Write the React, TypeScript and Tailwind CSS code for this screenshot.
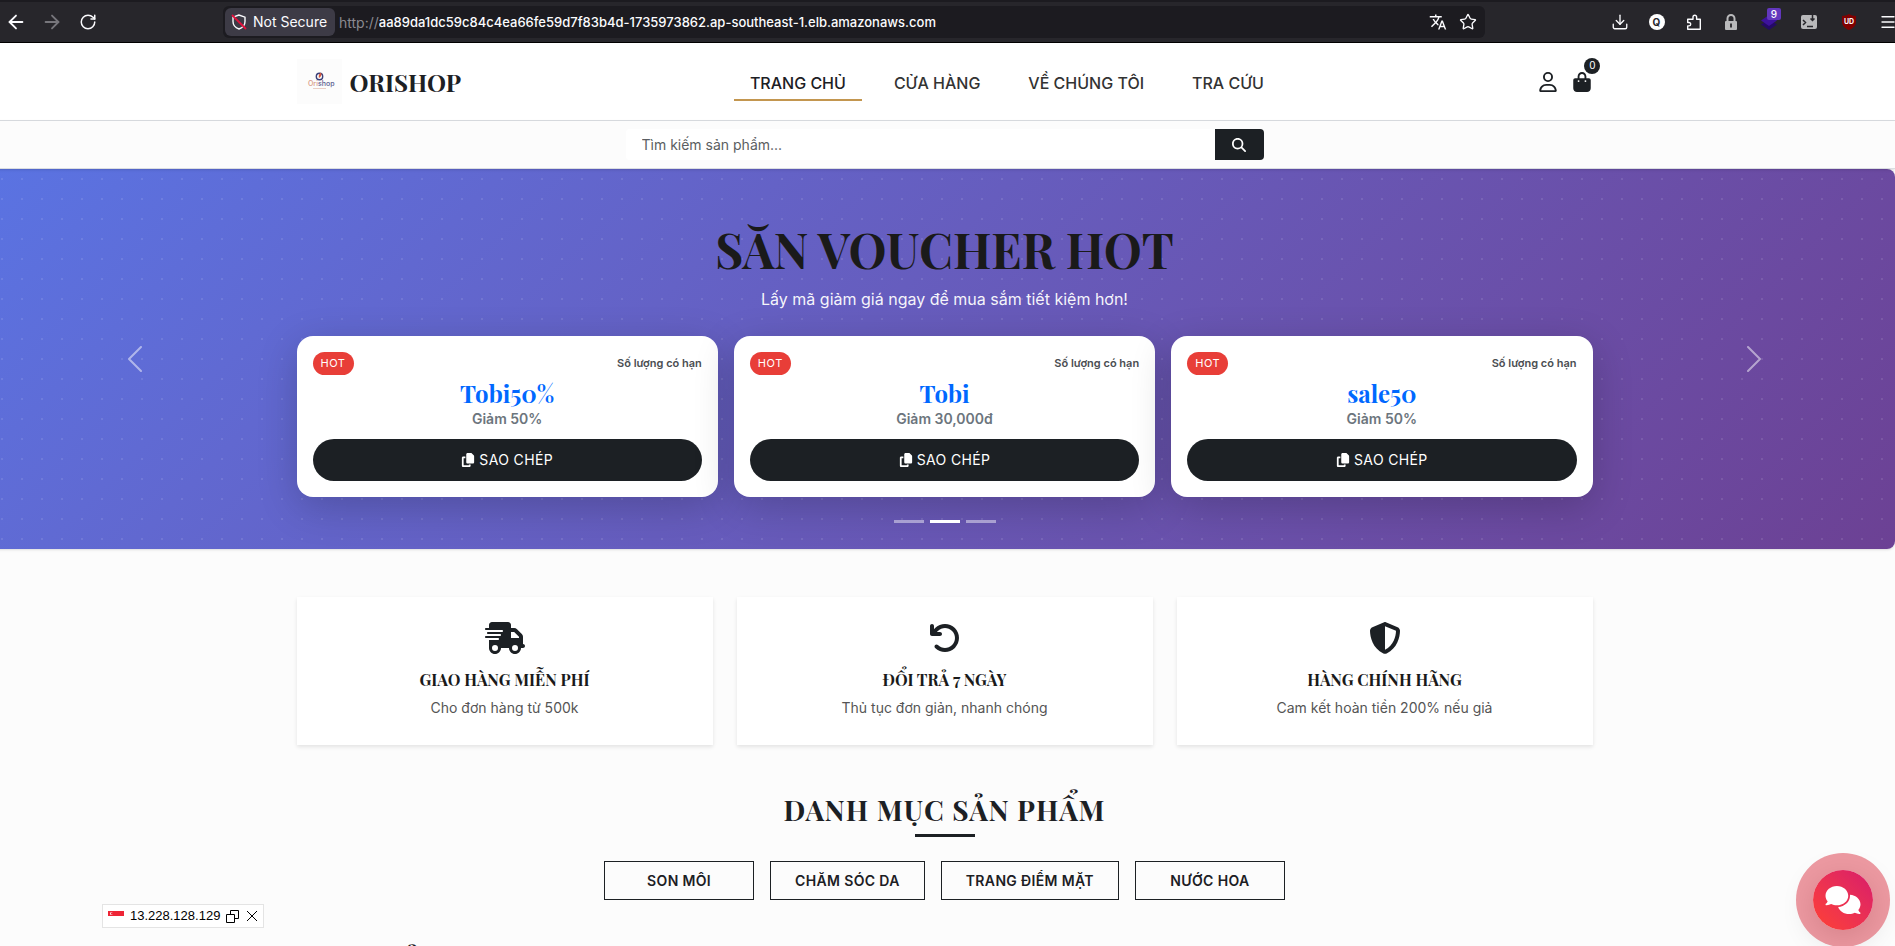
import { useState } from "react";
import {
  FaArrowRotateLeft,
  FaBagShopping,
  FaComments,
  FaCopy,
  FaMagnifyingGlass,
  FaRegUser,
  FaShieldHalved,
  FaTruckFast,
} from "react-icons/fa6";
import { ArrowLeft, ArrowRight, Download, Menu, RotateCw, Star } from "lucide-react";
import { MdOutlineTranslate } from "react-icons/md";

const serif = "font-['Playfair_Display','Liberation_Serif',serif]";

const NAV = ["TRANG CHỦ", "CỬA HÀNG", "VỀ CHÚNG TÔI", "TRA CỨU"];

const VOUCHERS = [
  { code: "Tobi50%", discount: "Giảm 50%" },
  { code: "Tobi", discount: "Giảm 30,000đ" },
  { code: "sale50", discount: "Giảm 50%" },
];

const FEATURES = [
  { icon: FaTruckFast, title: "GIAO HÀNG MIỄN PHÍ", text: "Cho đơn hàng từ 500k" },
  { icon: FaArrowRotateLeft, title: "ĐỔI TRẢ 7 NGÀY", text: "Thủ tục đơn giản, nhanh chóng" },
  { icon: FaShieldHalved, title: "HÀNG CHÍNH HÃNG", text: "Cam kết hoàn tiền 200% nếu giả" },
];

const CATEGORIES = ["SON MÔI", "CHĂM SÓC DA", "TRANG ĐIỂM MẶT", "NƯỚC HOA"];

const toolClass = "flex w-[37px] shrink-0 justify-center";
const extensionClass = "flex w-10 shrink-0 justify-center";

function BrowserBar() {
  return (
    <div className="flex h-[43px] items-center border-t-2 border-b border-t-[#1c1b20] border-b-black bg-[#27262b] text-[#fbfbfe]">
      <div className="flex w-[223px] shrink-0 items-center">
        <button type="button" aria-label="Back" className="flex w-8 justify-center">
          <ArrowLeft size={22} strokeWidth={2} />
        </button>
        <button type="button" aria-label="Forward" className="flex w-10 justify-center text-[#77767c]">
          <ArrowRight size={22} strokeWidth={2} />
        </button>
        <button type="button" aria-label="Reload" className="flex w-8 justify-center">
          <RotateCw size={18} strokeWidth={2} />
        </button>
      </div>
      <div className="flex h-8 w-[1262px] items-center rounded-md bg-[#1c1b20] pr-2 pl-0.5">
        <button
          type="button"
          className="flex h-7 w-[110px] shrink-0 items-center gap-1.5 rounded-md bg-[#3d3b46] pl-1.5 text-sm"
        >
          <svg viewBox="0 0 16 16" className="size-4" fill="none" strokeWidth="1.4">
            <path d="M8 1 2 3.2v4.3C2 11 4.6 13.8 8 15c3.400-1.200 6-4 6-7.500V3.200z" stroke="#fbfbfe" />
            <path d="M1 1l14 14" stroke="#e2103c" strokeWidth="1.800" />
          </svg>
          <span className="whitespace-nowrap">Not Secure</span>
        </button>
        <label htmlFor="address" className="pt-0.5 pl-1 text-sm text-[#8b8a90]">
          http://
        </label>
        <input
          id="address"
          defaultValue="aa89da1dc59c84c4ea66fe59d7f83b4d-1735973862.ap-southeast-1.elb.amazonaws.com"
          className="min-w-0 grow bg-transparent pt-0.5 text-[13px] font-medium outline-none"
        />
        <button type="button" aria-label="Translate" className="mr-3">
          <MdOutlineTranslate size={18} />
        </button>
        <button type="button" aria-label="Bookmark">
          <Star size={18} strokeWidth={1.8} />
        </button>
      </div>
      <div className="flex grow items-center justify-end text-[#fbfbfe]">
        <button type="button" aria-label="Downloads" className={toolClass}>
          <Download size={18} strokeWidth={1.8} />
        </button>
        <button type="button" aria-label="Q" className={toolClass}>
          <span className="flex size-4 items-center justify-center rounded-full bg-white text-[10px] font-bold text-[#27262b]">
            Q
          </span>
        </button>
        <button type="button" aria-label="Extensions" className={toolClass}>
          <svg viewBox="0 0 16 16" className="size-4" fill="none" stroke="currentColor" strokeWidth="1.4" strokeLinejoin="round">
            <path d="M1.700 15.200h12.600v-10h-3.700V3A1.800 1.800 0 0 0 7 3v2.200H1.700v3.300H3a1.700 1.700 0 0 1 0 3.400H1.700z" />
          </svg>
        </button>
        <button type="button" aria-label="Lock" className={toolClass}>
          <svg viewBox="0 0 16 16" className="size-4">
            <path d="M4.500 8V4.500a3.500 3.500 0 0 1 7 0V8" fill="none" stroke="#b9b9bb" strokeWidth="2" />
            <rect x="2" y="7" width="12" height="9" rx="1" fill="#b9b9bb" />
            <path d="M8 9.500v4" stroke="#27262b" strokeWidth="1.800" />
          </svg>
        </button>
        <button type="button" aria-label="Layers" className={extensionClass}>
          <span className="relative">
            <svg viewBox="0 0 16 16" className="size-4">
              <path d="M8 5l8 5.500L8 16 0 10.500z" fill="#240a66" />
              <path d="M8 1l8 5.500L8 12 0 6.500z" fill="#3d129c" />
            </svg>
            <span className="absolute -top-1.5 left-1.5 flex h-3 w-3.5 items-center justify-center rounded-xs bg-[#6237bd] text-[10px] font-medium">
              9
            </span>
          </span>
        </button>
        <button type="button" aria-label="Console" className={extensionClass}>
          <svg viewBox="0 0 16 16" className="size-4">
            <rect y="1" width="16" height="14" rx="2" fill="#b9b9bb" />
            <path d="M2 6l2.500 2.500L2 11M6 12.500h6M11.500 1v5M9.500 4.500l2 2 2-2" fill="none" stroke="#27262b" strokeWidth="1.500" />
          </svg>
        </button>
        <button type="button" aria-label="Shield" className={extensionClass}>
          <span className="relative flex size-4 items-center justify-center">
            <svg viewBox="0 0 16 16" className="size-4">
              <path d="M8 0c2 1.300 4 2 7 2v6c0 4-3.500 6.500-7 8-3.500-1.500-7-4-7-8V2c3 0 5-.7 7-2z" fill="#800000" />
            </svg>
            <span className="absolute text-[7px] font-bold">UD</span>
          </span>
        </button>
        <button type="button" aria-label="Menu" className="w-[26px] shrink-0 pl-2.5">
          <Menu size={18} strokeWidth={1.8} />
        </button>
      </div>
    </div>
  );
}

function Logo() {
  return (
    <svg viewBox="0 0 45 45" className="size-[45px] bg-[#fcfcfc]" aria-hidden="true">
      <circle cx="22.500" cy="17.500" r="3.200" fill="none" stroke="#3a3f78" strokeWidth="1.400" />
      <path d="M22 19c-1-3 1-5 2-5.500 1 2 0 4.500-2 5.500z" fill="#d9593b" />
      <text x="11" y="27" fontSize="7" fontFamily="Inter" fontWeight="500" fill="#d99a86">
        Ori<tspan fill="#5b608f">shop</tspan>
      </text>
      <path d="M16 29.500h13" stroke="#eacfc6" strokeWidth="1" />
    </svg>
  );
}

function Header() {
  return (
    <header className="border-b border-[#dadde1] bg-white">
      <div className="mx-auto flex h-[77px] max-w-[1296px] items-center justify-between">
        <a href="#" className="flex items-center gap-2">
          <Logo />
          <span className={`text-2xl font-bold text-[#1c2024] ${serif}`}>ORISHOP</span>
        </a>
        <nav className="ml-3.5 flex gap-4">
          {NAV.map((label, i) => (
            <a
              key={label}
              href="#"
              className={
                i === 0
                  ? "border-b-2 border-[#c3964f] px-4 pt-2 pb-1 font-medium text-[#1c2024]"
                  : "border-b-2 border-transparent px-4 pt-2 pb-1 font-medium text-[#333333]"
              }
            >
              {label}
            </a>
          ))}
        </nav>
        <div className="flex items-center gap-3.5 text-[#1c2024]">
          <a href="#" aria-label="Tài khoản">
            <FaRegUser size={20} />
          </a>
          <a href="#" aria-label="Giỏ hàng" className="relative">
            <FaBagShopping size={20} />
            <span className="absolute -top-3.5 left-3 flex size-4 items-center justify-center rounded-full bg-[#1c2024] text-[10px] text-white">
              0
            </span>
          </a>
        </div>
      </div>
    </header>
  );
}

function SearchBar() {
  return (
    <div className="relative z-10 border-b border-[#dadde1] bg-[#fcfcfc] py-2 shadow-sm">
      <form className="mx-auto flex h-[31px] max-w-[638px]" onSubmit={(e) => e.preventDefault()}>
        <input
          type="search"
          aria-label="Tìm kiếm sản phẩm"
          placeholder="Tìm kiếm sản phẩm..."
          className="min-w-0 grow rounded-l-sm bg-white px-4 text-sm outline-none placeholder:text-[#5b5e61]"
        />
        <button
          type="submit"
          aria-label="Tìm"
          className="flex w-[49px] items-center justify-center rounded-r-sm bg-[#1c2024] text-white"
        >
          <FaMagnifyingGlass size={14} />
        </button>
      </form>
    </div>
  );
}

function VoucherCard({ code, discount }: { code: string; discount: string }) {
  return (
    <div className="rounded-2xl bg-white p-4 text-center shadow-[0_10px_40px_rgba(0,0,0,0.2)]">
      <div className="flex items-center justify-between">
        <span className="flex h-[23px] items-center rounded-full bg-[#e83e38] px-2 text-[11px] tracking-wider text-white">
          HOT
        </span>
        <span className="text-[11px] font-semibold text-[#4b4e52]">Số lượng có hạn</span>
      </div>
      <h3 className={`my-0.5 text-2xl leading-8 font-bold text-[#0068ff] ${serif}`}>{code}</h3>
      <p className="text-sm leading-4 font-semibold text-[#6c757d]">{discount}</p>
      <button
        type="button"
        className="mt-3 flex h-[42px] w-full items-center justify-center gap-1 rounded-full bg-[#1c2024] text-sm tracking-wide text-white"
      >
        <FaCopy size={14} />
        SAO CHÉP
      </button>
    </div>
  );
}

function Chevron({ d }: { d: string }) {
  return (
    <svg viewBox="0 0 32 32" className="size-8" fill="none" stroke="white" strokeWidth="2" strokeLinecap="round" strokeLinejoin="round">
      <path d={d} />
    </svg>
  );
}

function VoucherHero() {
  const [slide, setSlide] = useState(1);

  return (
    <section className="relative overflow-hidden rounded-r-lg bg-linear-135 from-[#5a73e2] to-[#6c4194] shadow-sm">
      <div className="bg-[radial-gradient(circle,rgba(255,255,255,0.1)_1px,transparent_1px)] bg-[size:20px_20px] bg-[position:-2px_0px]">
        <div className="mx-auto flex h-[380px] max-w-[1296px] flex-col pt-[50px] text-center">
          <h1 className={`text-5xl leading-[60px] font-bold text-[#1a1a1a] ${serif}`}>SĂN VOUCHER HOT</h1>
          <p className="mt-2 leading-6 text-white/95">Lấy mã giảm giá ngay để mua sắm tiết kiệm hơn!</p>
          <div className="mt-[25px] grid grid-cols-3 gap-4">
            {VOUCHERS.map((v) => (
              <VoucherCard key={v.code} {...v} />
            ))}
          </div>
          <div className="mt-[23px] flex justify-center gap-1.5">
            {[0, 1, 2].map((i) => (
              <button
                key={i}
                type="button"
                aria-label={`Slide ${i + 1}`}
                onClick={() => setSlide(i)}
                className={i === slide ? "h-[3px] w-[30px] bg-white" : "h-[3px] w-[30px] bg-white/45"}
              />
            ))}
          </div>
        </div>
      </div>
      <button
        type="button"
        aria-label="Trước"
        className="absolute inset-y-0 left-0 flex w-[15%] items-center justify-center opacity-50"
        onClick={() => setSlide((slide + 2) % 3)}
      >
        <Chevron d="M20 4 8 16l12 12" />
      </button>
      <button
        type="button"
        aria-label="Sau"
        className="absolute inset-y-0 right-0 flex w-[15%] items-center justify-center opacity-50"
        onClick={() => setSlide((slide + 1) % 3)}
      >
        <Chevron d="M12 4l12 12-12 12" />
      </button>
    </section>
  );
}

function Features() {
  return (
    <section className="mx-auto mt-12 grid max-w-[1296px] grid-cols-3 gap-6">
      {FEATURES.map(({ icon: Icon, title, text }) => (
        <div
          key={title}
          className="flex h-[148px] flex-col items-center bg-white pt-[25px] shadow-[0_2px_4px_rgba(0,0,0,0.1)]"
        >
          <Icon className="h-8 w-10 text-[#1c2024]" />
          <h3 className={`mt-4 text-base leading-5 font-bold text-[#1a1a1a] ${serif}`}>{title}</h3>
          <p className="mt-2 text-sm text-[#555555]">{text}</p>
        </div>
      ))}
    </section>
  );
}

function Categories() {
  return (
    <section className="mt-10 flex flex-col items-center">
      <h2 className={`text-[28px] leading-[49px] font-bold tracking-[1px] text-[#1c2024] ${serif}`}>
        DANH MỤC SẢN PHẨM
      </h2>
      <div className="h-[3px] w-[60px] bg-[#1c2024]" />
      <div className="mt-6 flex gap-4">
        {CATEGORIES.map((label) => (
          <a
            key={label}
            href="#"
            className="flex h-[39px] min-w-[150px] items-center justify-center border border-[#1c2024] px-6 text-sm font-semibold tracking-wide text-[#1c2024]"
          >
            {label}
          </a>
        ))}
      </div>
    </section>
  );
}

function Products() {
  return (
    <section className="mx-auto mt-10 max-w-[1296px]">
      <h2 className={`text-[28px] leading-[49px] font-bold text-[#1c2024] ${serif}`}>SẢN PHẨM</h2>
    </section>
  );
}

function IpBadge() {
  return (
    <div className="fixed bottom-[18px] left-[102px] flex h-6 w-[162px] items-center border border-[#e4e4e4] bg-white pl-[5px] font-['Liberation_Sans',sans-serif] text-[13px] text-black">
      <svg viewBox="0 0 16 10" className="mr-1.5 h-2.5 w-4" aria-hidden="true">
        <rect width="16" height="5" fill="#ee2536" />
        <rect y="5" width="16" height="5" fill="#ffffff" />
        <circle cx="3.500" cy="2.500" r="1.500" fill="#ffffff" />
        <circle cx="4.200" cy="2.500" r="1.300" fill="#ee2536" />
      </svg>
      13.228.128.129
      <button type="button" aria-label="Copy" className="ml-1.5">
        <svg viewBox="0 0 13 13" className="size-[13px]" fill="none" stroke="black">
          <path d="M4.500 4V.5h8v8H9M.5 4.500h8v8h-8z" />
        </svg>
      </button>
      <button type="button" aria-label="Close" className="ml-2">
        <svg viewBox="0 0 10 10" className="size-2.5" stroke="black">
          <path d="M0 0l10 10M10 0 0 10" />
        </svg>
      </button>
    </div>
  );
}

export default function App() {
  return (
    <div className="h-screen overflow-hidden bg-[#fcfcfc] font-['Inter',sans-serif]">
      <BrowserBar />
      <div className="-ml-1.5">
        <Header />
        <SearchBar />
        <VoucherHero />
        <Features />
        <Categories />
        <Products />
      </div>
      <IpBadge />
      <button
        type="button"
        aria-label="Chat"
        className="fixed right-[22px] bottom-4 flex size-[60px] items-center justify-center rounded-full bg-linear-45 from-[#ff4030] to-[#d81b69] text-white shadow-[0_0_0_17px_rgba(220,53,69,0.5),0_8px_32px_rgba(0,0,0,0.2)]"
      >
        <FaComments className="h-7 w-9" />
      </button>
    </div>
  );
}
